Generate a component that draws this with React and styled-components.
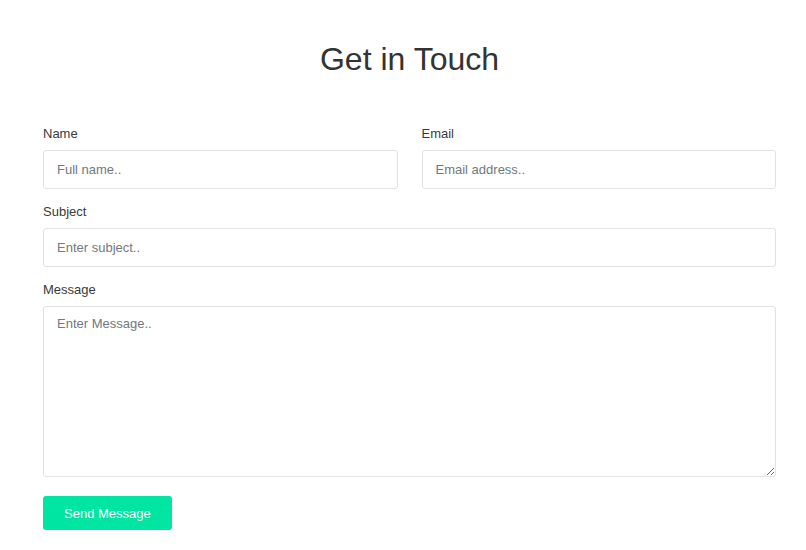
import React from 'react';
import styled, { createGlobalStyle } from 'styled-components';

const GlobalStyle = createGlobalStyle`
	* {
		box-sizing: border-box;
	}
	body {
		margin: 0;
		background: #ffffff;
		font-family: 'Liberation Sans', Arial, sans-serif;
		color: #333333;
	}
`;

const ContactStyles = styled.section`
	padding: 40px 30px 20px 43px;
`;

const Title = styled.h2`
	margin: 0 0 46px;
	font-size: 32px;
	font-weight: 400;
	line-height: 38px;
	text-align: center;
	color: #333333;
`;

const Form = styled.form`
	display: flex;
	flex-direction: column;
	gap: 13px;
`;

const Row = styled.div`
	display: grid;
	grid-template-columns: 1fr 1fr;
	column-gap: 24px;
`;

const Field = styled.div`
	display: flex;
	flex-direction: column;
`;

const Label = styled.label`
	font-size: 13px;
	line-height: 20px;
	margin-bottom: 6px;
	color: #3a3a3a;
`;

const inputBase = `
	width: 100%;
	border: 1px solid #e2e2e2;
	border-radius: 3px;
	padding: 0 13px;
	font-family: 'Liberation Sans', Arial, sans-serif;
	font-size: 13px;
	color: #333333;
	background: #ffffff;
	outline: none;
	&::placeholder {
		color: #72787e;
	}
`;

const Input = styled.input`
	${inputBase}
	height: 39px;
`;

const TextArea = styled.textarea`
	${inputBase}
	height: 171px;
	padding-top: 8px;
	line-height: 18px;
	resize: vertical;
	display: block;
`;

const SendButton = styled.button`
	align-self: flex-start;
	margin-top: 6px;
	height: 34px;
	padding: 0 21px;
	border: none;
	border-radius: 3px;
	background: #00e6a2;
	color: #ffffff;
	font-family: 'Liberation Sans', Arial, sans-serif;
	font-size: 13px;
	cursor: pointer;
`;

export default function App() {
	return (
		<>
			<GlobalStyle />
			<ContactStyles>
				<Title>Get in Touch</Title>
				<Form onSubmit={(e) => e.preventDefault()}>
					<Row>
						<Field>
							<Label htmlFor='name'>Name</Label>
							<Input id='name' type='text' placeholder='Full name..' />
						</Field>
						<Field>
							<Label htmlFor='email'>Email</Label>
							<Input id='email' type='email' placeholder='Email address..' />
						</Field>
					</Row>
					<Field>
						<Label htmlFor='subject'>Subject</Label>
						<Input id='subject' type='text' placeholder='Enter subject..' />
					</Field>
					<Field>
						<Label htmlFor='message'>Message</Label>
						<TextArea id='message' placeholder='Enter Message..' />
					</Field>
					<SendButton type='submit'>Send Message</SendButton>
				</Form>
			</ContactStyles>
		</>
	);
}
